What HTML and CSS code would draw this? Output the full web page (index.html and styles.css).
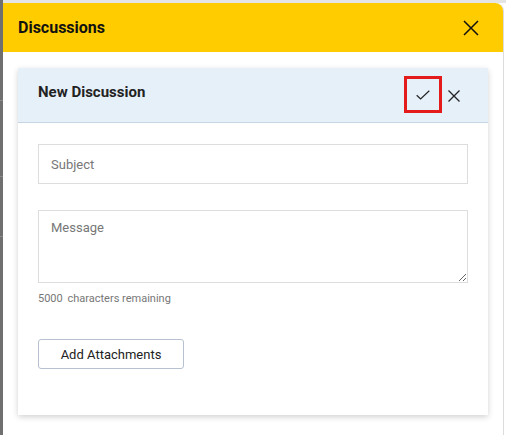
FILE: index.html
```html
<!DOCTYPE html>
<html lang="en">

<head>
    <meta charset="UTF-8">
    <meta name="viewport" content="width=device-width, initial-scale=1.0">
    <title>Discussions</title>
    <link rel="stylesheet" href="styles.css">
</head>

<body>
    <div class="screen">
        <div class="backdrop-edge"></div>
        <div class="panel">
            <div class="panel-header">
                <h2>Discussions</h2>
                <button class="icon-btn panel-close" aria-label="Close">
                    <svg width="16" height="16" viewBox="0 0 16 16"><path d="M1 1 L15 15 M15 1 L1 15" stroke="#111" stroke-width="1.5" fill="none"/></svg>
                </button>
            </div>
            <div class="card">
                <div class="card-header">
                    <h3>New Discussion</h3>
                    <div class="actions">
                        <button class="icon-btn save-btn" aria-label="Save">
                            <svg width="14" height="10" viewBox="0 0 14 10"><path d="M0.7 5.2 L4.6 9 L13.3 0.7" stroke="#222" stroke-width="1.2" fill="none"/></svg>
                        </button>
                        <button class="icon-btn cancel-btn" aria-label="Cancel">
                            <svg width="12" height="12" viewBox="0 0 12 12"><path d="M0.5 0.5 L11.5 11.5 M11.5 0.5 L0.5 11.5" stroke="#222" stroke-width="1.3" fill="none"/></svg>
                        </button>
                    </div>
                </div>
                <form class="card-body">
                    <input type="text" class="field" placeholder="Subject">
                    <textarea class="field message" placeholder="Message"></textarea>
                    <div class="counter"><span>5000</span> characters remaining</div>
                    <button type="button" class="attach-btn">Add Attachments</button>
                </form>
            </div>
        </div>
    </div>
</body>

</html>
```

FILE: styles.css
```css
body {
    margin: 0;
    background-color: #ffffff;
    font-family: Roboto, "Liberation Sans", sans-serif;
    color: #222222;
}

.screen {
    display: flex;
    height: 435px;
    border-top: 3px solid #e4e4e4;
    box-sizing: border-box;
}

.backdrop-edge {
    width: 3px;
    margin-top: -3px;
    background: linear-gradient(to bottom,
        #6f6f6f 0, #6f6f6f 100px, #8a8a8a 100px, #8a8a8a 101px,
        #6f6f6f 101px, #6f6f6f 176px, #8a8a8a 176px, #8a8a8a 177px,
        #6f6f6f 177px, #6f6f6f 236px, #8a8a8a 236px, #8a8a8a 237px,
        #6f6f6f 237px);
}

.panel {
    width: 500px;
    background-color: #ffffff;
    border-right: 1px solid #dcdcdc;
    border-top-right-radius: 8px;
}

.panel-header {
    height: 49px;
    background-color: #ffcc00;
    border-top-right-radius: 8px;
    display: flex;
    align-items: center;
    justify-content: space-between;
    padding: 0 24px 0 15px;
}

.panel-header h2 {
    margin: 0;
    font-size: 16px;
    font-weight: 700;
    color: #111111;
}

.icon-btn {
    border: none;
    background: none;
    padding: 0;
    display: flex;
    align-items: center;
    justify-content: center;
    cursor: pointer;
}

.card {
    margin: 16px 15px 0 15px;
    height: 347px;
    background-color: #ffffff;
    box-shadow: 0 2px 6px rgba(0, 0, 0, 0.18);
}

.card-header {
    height: 54px;
    background-color: #e6f0f9;
    border-bottom: 1px solid #c6d4e3;
    display: flex;
    align-items: center;
    justify-content: space-between;
    padding: 0 28px 0 20px;
}

.card-header h3 {
    margin: 0 0 6px 0;
    font-size: 15px;
    font-weight: 700;
    color: #222222;
}

.actions {
    display: flex;
    align-items: center;
    gap: 6px;
}

.save-btn {
    width: 38px;
    height: 37px;
    box-sizing: border-box;
    border: 3px solid #e31b1b;
    padding-top: 1px;
    margin-bottom: 1px;
}

.cancel-btn {
    width: 12px;
    height: 12px;
    margin-top: 1px;
}

.card-body {
    padding: 21px 20px 0 20px;
    display: flex;
    flex-direction: column;
    align-items: flex-start;
}

.field {
    width: 430px;
    box-sizing: border-box;
    border: 1px solid #dddddd;
    font-family: Roboto, "Liberation Sans", sans-serif;
    font-size: 13px;
    color: #222222;
    padding: 0 12px;
    outline: none;
}

.field::placeholder {
    color: #777777;
}

input.field {
    height: 40px;
}

.message {
    height: 73px;
    margin-top: 26px;
    padding-top: 9px;
    resize: vertical;
}

.counter {
    margin-top: 9px;
    font-size: 11px;
    color: #777777;
}

.counter span {
    margin-right: 2px;
}

.attach-btn {
    margin-top: 34px;
    width: 146px;
    height: 30px;
    background-color: #ffffff;
    border: 1px solid #b7c1d1;
    border-radius: 3px;
    font-family: Roboto, "Liberation Sans", sans-serif;
    font-size: 13px;
    color: #222222;
    cursor: pointer;
}
```
